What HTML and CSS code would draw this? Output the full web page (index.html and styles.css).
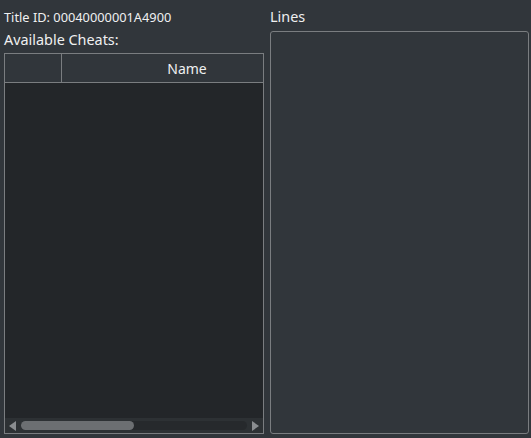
FILE: index.html
```html
<!DOCTYPE html>
<html>
<head>
<meta charset="utf-8">
<link rel="stylesheet" href="styles.css">
</head>
<body>
<div class="app">
  <div class="left">
    <div class="title-id">Title ID: 00040000001A4900</div>
    <div class="label">Available Cheats:</div>
    <div class="table">
      <div class="header">
        <div class="hcell first"></div>
        <div class="hcell name">Name</div>
      </div>
      <div class="tbody"></div>
      <div class="hscroll">
        <svg class="arrow" width="8" height="10" viewBox="0 0 8 10"><polygon points="7,0 7,10 0,5" fill="#8a8d90"/></svg>
        <div class="groove"><div class="thumb"></div></div>
        <svg class="arrow" width="8" height="10" viewBox="0 0 8 10"><polygon points="1,0 1,10 8,5" fill="#8a8d90"/></svg>
      </div>
    </div>
  </div>
  <div class="right">
    <div class="label lines-label">Lines</div>
    <div class="lines-box"></div>
  </div>
</div>
</body>
</html>
```
FILE: styles.css
```css
html, body {
  margin: 0;
  padding: 0;
  background: #31363b;
  width: 531px;
  height: 438px;
  overflow: hidden;
  font-family: "Noto Sans", "Open Sans", sans-serif;
  color: #eff0f1;
}
.app {
  display: flex;
  gap: 6px;
  padding: 0 2px 4px 4px;
  height: 438px;
  box-sizing: border-box;
}
.left {
  width: 260px;
  display: flex;
  flex-direction: column;
}
.right {
  flex: 1;
  display: flex;
  flex-direction: column;
}
.title-id {
  font-size: 12.8px;
  line-height: 16px;
  margin-top: 9px;
}
.label {
  font-size: 14.4px;
  line-height: 18px;
}
.left .label {
  margin-top: 6px;
  margin-bottom: 4px;
}
.lines-label {
  margin-top: 8px;
  margin-bottom: 5px;
}
.table {
  flex: 1;
  border: 1px solid #7a7d80;
  display: flex;
  flex-direction: column;
  background: #232629;
}
.header {
  display: flex;
  height: 28px;
  background: #31363b;
  border-bottom: 1px solid #7a7d80;
  overflow: hidden;
}
.hcell {
  font-size: 14px;
  line-height: 29px;
  flex: none;
}
.hcell.first {
  width: 56px;
  border-right: 1px solid #7a7d80;
}
.hcell.name {
  width: 250px;
  text-align: center;
}
.tbody {
  flex: 1;
}
.hscroll {
  height: 15px;
  background: #2d3134;
  display: flex;
  align-items: center;
  gap: 4px;
  padding: 0 4px 0 4px;
}
.arrow {
  flex: none;
}
.groove {
  flex: 1;
  height: 9px;
  border-radius: 5px;
  background: #26292c;
  display: flex;
}
.thumb {
  width: 50%;
  border-radius: 5px;
  background: #6c6f72;
}
.lines-box {
  flex: 1;
  border: 1px solid #7a7d80;
  border-radius: 3px;
  background: #31363b;
}
```
